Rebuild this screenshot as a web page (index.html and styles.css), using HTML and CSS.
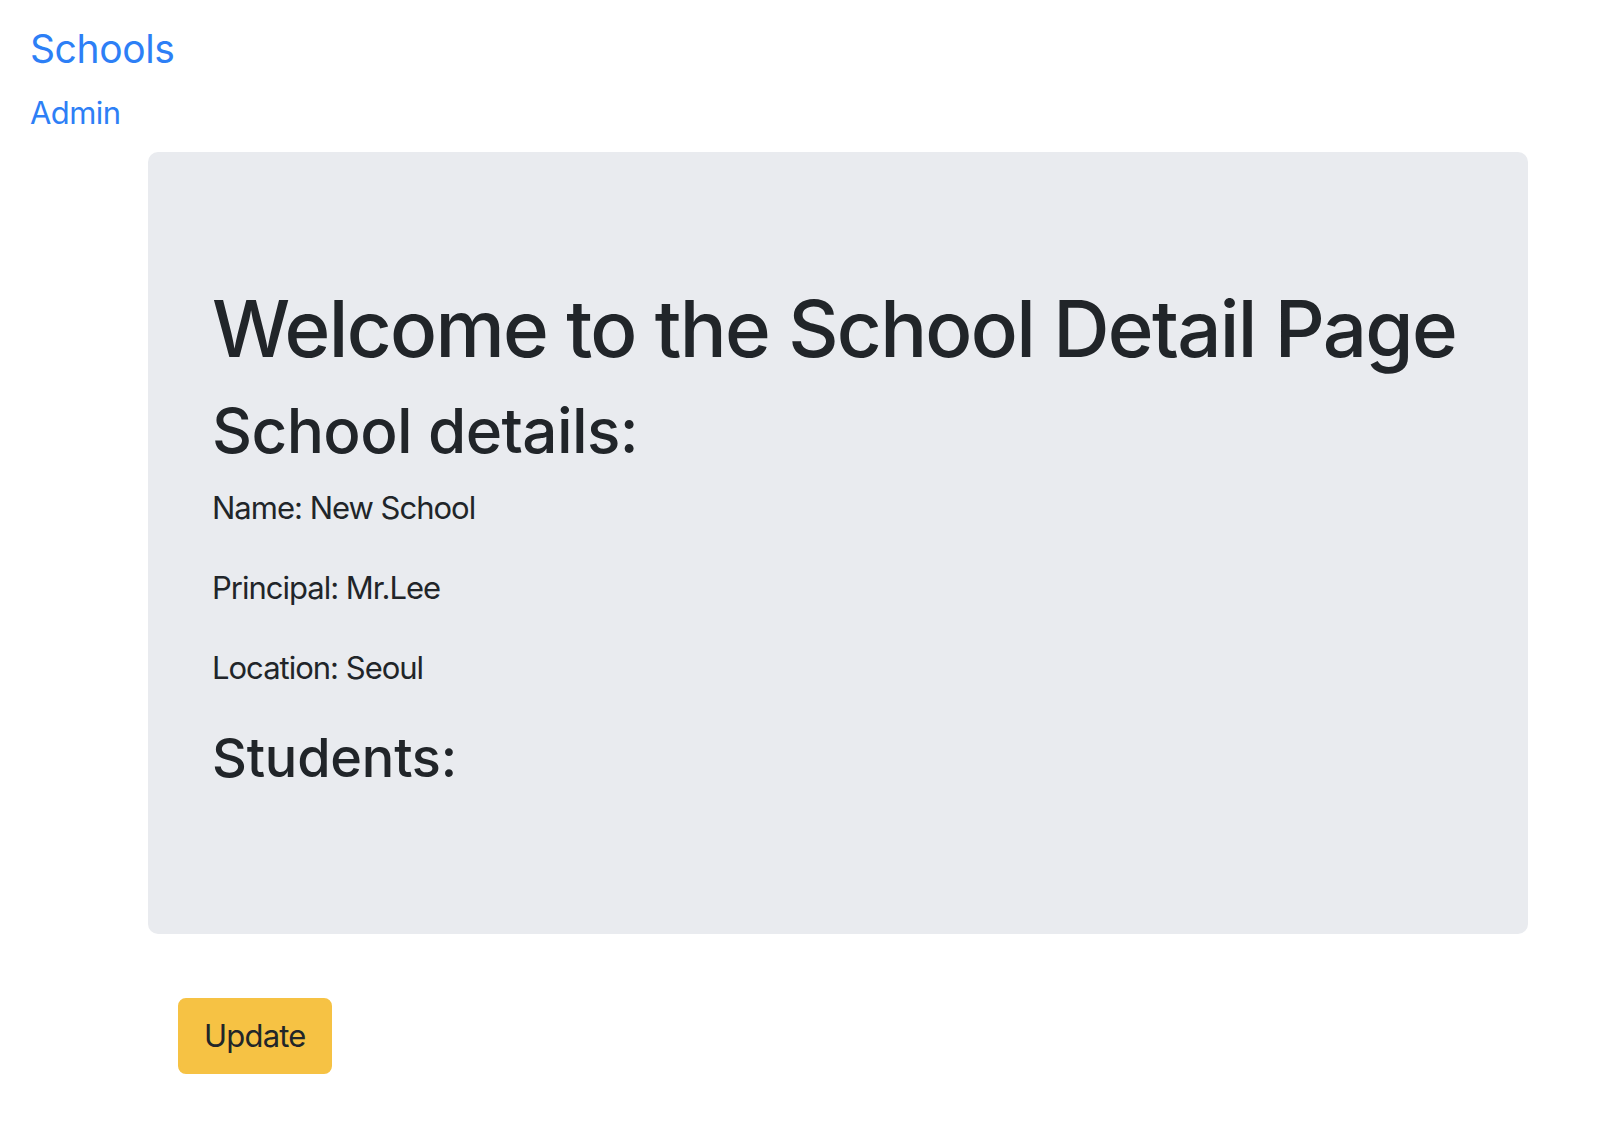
FILE: index.html
```html
<!DOCTYPE html>
<html lang="en">
<head>
<meta charset="utf-8">
<title>School Detail</title>
<link rel="stylesheet" href="styles.css">
</head>
<body>
<nav class="navbar">
  <a class="brand" href="#">Schools</a>
  <ul class="nav-list">
    <li><a class="nav-link" href="#">Admin</a></li>
  </ul>
</nav>
<main class="container">
  <section class="jumbotron">
    <h1 class="title">Welcome to the School Detail Page</h1>
    <h2 class="subtitle">School details:</h2>
    <p class="detail">Name: New School</p>
    <p class="detail">Principal: Mr.Lee</p>
    <p class="detail">Location: Seoul</p>
    <h3 class="section-title">Students:</h3>
  </section>
  <div class="actions">
    <button class="btn-warning" type="button">Update</button>
  </div>
</main>
</body>
</html>
```
FILE: styles.css
```css
* { box-sizing: border-box; }
html, body { margin: 0; padding: 0; }
body {
  font-family: Inter, "Noto Sans", "Liberation Sans", sans-serif;
  font-size: 31px;
  line-height: 48px;
  letter-spacing: -1px;
  color: #212529;
  background: #ffffff;
}
.navbar {
  padding: 19px 32px 0 30px;
  display: flex;
  flex-direction: column;
  align-items: flex-start;
}
.brand {
  font-size: 39px;
  line-height: 60px;
  letter-spacing: -0.4px;
  color: #2d7ff6;
  text-decoration: none;
}
.nav-list {
  list-style: none;
  margin: 10px 0 0;
  padding: 0;
}
.nav-link {
  display: block;
  font-size: 31px;
  line-height: 48px;
  letter-spacing: -0.6px;
  color: #2d7ff6;
  text-decoration: none;
}
.container {
  margin: 15px 70px 0 148px;
}
.jumbotron {
  background: #e9ebef;
  border-radius: 10px;
  padding: 129px 64px 127px 64px;
  margin-bottom: 64px;
}
.title {
  margin: 0 0 16px;
  font-size: 78px;
  font-weight: 500;
  line-height: 96px;
  letter-spacing: -1.7px;
  white-space: nowrap;
}
.subtitle {
  margin: 0 0 14px;
  font-size: 62px;
  font-weight: 500;
  line-height: 76.8px;
  letter-spacing: -0.6px;
}
.detail {
  margin: 0 0 32px;
  font-size: 31px;
  line-height: 48px;
}
.section-title {
  margin: 0 0 16px;
  font-size: 54px;
  font-weight: 500;
  line-height: 67.2px;
  letter-spacing: -0.2px;
}
.actions {
  padding-left: 30px;
}
.btn-warning {
  font-family: inherit;
  font-size: 31px;
  line-height: 48px;
  letter-spacing: -0.8px;
  color: #212529;
  background: #f6c244;
  border: 2px solid #f6c244;
  border-radius: 8px;
  padding: 12px 24px;
  cursor: pointer;
}
```
